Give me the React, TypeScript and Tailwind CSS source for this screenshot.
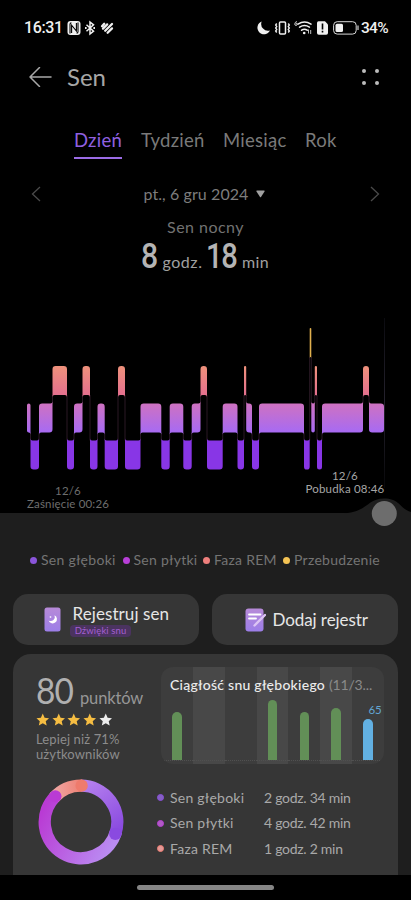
import React from "react";

type Stage = "W" | "R" | "L" | "D";

const LEVEL: Record<Stage, number> = { W: 3, R: 2, L: 1, D: 0 };
const TOP: Record<Stage, number> = { W: 18, R: 56, L: 93.5, D: 130.5 };
const BAR = 29;

// [stage, start, end] on the time axis
const stages: [Stage, number, number][] = [
  ["L", 27, 30.5],
  ["D", 30.5, 39],
  ["L", 39, 52.5],
  ["R", 52.5, 67],
  ["D", 67, 74],
  ["L", 74, 82.5],
  ["R", 82.5, 90],
  ["D", 90, 97.5],
  ["L", 97.5, 104.7],
  ["D", 104.7, 118],
  ["R", 118, 125],
  ["D", 125, 140.5],
  ["L", 140.5, 161.3],
  ["D", 161.3, 169.7],
  ["L", 169.7, 183.3],
  ["D", 183.3, 191.7],
  ["L", 191.7, 200.5],
  ["R", 200.5, 207],
  ["D", 207, 222.7],
  ["L", 222.7, 237.5],
  ["D", 237.5, 244],
  ["R", 244, 246.2],
  ["L", 246.2, 252],
  ["D", 252, 259],
  ["L", 259, 304],
  ["D", 304, 309.7],
  ["W", 309.7, 311.3],
  ["L", 311.3, 314.8],
  ["R", 314.8, 317],
  ["D", 317, 322],
  ["L", 322, 363],
  ["R", 363, 369],
  ["L", 369, 384],
];

const stagePath = (i: number) => {
  const [stage, x1, x2] = stages[i];
  const t = TOP[stage];
  const b = t + BAR;
  const r = Math.min(3.2, (x2 - x1) / 2);
  const f = Math.min(2, r);
  const prev = stages[i - 1];
  const next = stages[i + 1];
  const upLeft = prev && LEVEL[prev[0]] > LEVEL[stage];
  const downLeft = prev && !upLeft;
  const upRight = next && LEVEL[next[0]] > LEVEL[stage];
  const downRight = next && !upRight;
  return [
    upLeft
      ? `M${x1} ${t - f}Q${x1} ${t} ${x1 + f} ${t}`
      : `M${x1} ${t + r}Q${x1} ${t} ${x1 + r} ${t}`,
    upRight
      ? `L${x2 - f} ${t}Q${x2} ${t} ${x2} ${t - f}`
      : `L${x2 - r} ${t}Q${x2} ${t} ${x2} ${t + r}`,
    downRight
      ? `L${x2} ${b + f}Q${x2} ${b} ${x2 - f} ${b}`
      : `L${x2} ${b - r}Q${x2} ${b} ${x2 - r} ${b}`,
    downLeft
      ? `L${x1 + f} ${b}Q${x1} ${b} ${x1} ${b + f}`
      : `L${x1 + r} ${b}Q${x1} ${b} ${x1} ${b - r}`,
    "Z",
  ].join("");
};

const FILL: Record<Stage, string> = {
  W: "#e0b04e",
  R: "url(#rem)",
  L: "url(#light)",
  D: "#8836e6",
};

function StatusBar() {
  return (
    <div className="flex h-14 items-center pl-[24px] pr-[22px] text-[#f0f0f0]">
      <span className="w-[43px] whitespace-nowrap font-[Roboto] text-[16px] font-medium leading-none tracking-[-0.35px]">
        16:31
      </span>
      <svg width="47" height="16" viewBox="0 0 47 16" fill="none">
        <rect x="0.5" y="1" width="13" height="14" rx="3" fill="#f0f0f0" />
        <path
          d="M4.6 13V5.2L9.4 11V3M3 13.4V4.2q0-1.3 1.4-1.3M11 2.6v9.2q0 1.3-1.4 1.3"
          stroke="#000"
          strokeWidth="1.1"
        />
        <path
          d="M19.5 4.8l7 6.4L23 14V2l3.5 2.8-7 6.4"
          stroke="#f0f0f0"
          strokeWidth="1.5"
        />
        <path d="M18 8h1.6M26.4 8H28" stroke="#f0f0f0" strokeWidth="1.8" />
        <path
          d="M35 6.2l2.2-2.4M36 8.6l4.2-4.2M38.2 10.8l6.8-6.800M40.600 12.800L45 8.400"
          stroke="#f0f0f0"
          strokeWidth="2.300"
          strokeLinecap="round"
        />
      </svg>
      <svg
        className="ml-auto"
        width="102"
        height="16"
        viewBox="0 0 102 16"
        fill="none"
      >
        <path
          d="M5.200 1.800A6.600 6.600 0 1 0 13.500 10.800 6.800 6.800 0 0 1 5.200 1.800Z"
          fill="#f0f0f0"
          transform="translate(-0.500 -0.300)"
        />
        <rect
          x="22.500"
          y="2"
          width="6"
          height="12"
          rx="1"
          stroke="#f0f0f0"
          strokeWidth="1.500"
        />
        <path
          d="M19.700 3.500l-1 1.500 1 1.500-1 1.500 1 1.500-1 1.500 1 1.500M31.300 3.500l1 1.500-1 1.500 1 1.500-1 1.500 1 1.500-1 1.500"
          stroke="#f0f0f0"
          strokeWidth="1.400"
        />
        <path
          d="M39.600 1.200q-1.800 1.500-1.800 3a1.200 1.200 0 1 0 1.200-1.200"
          stroke="#f0f0f0"
          strokeWidth="0.900"
        />
        <path
          d="M41 4.200q6.500-4.200 13 0M42.600 7.200q4.900-3.200 9.800 0M44.600 10.200q2.900-2 5.600 0"
          stroke="#f0f0f0"
          strokeWidth="1.500"
          strokeLinecap="round"
        />
        <circle cx="47.200" cy="13" r="1.300" fill="#f0f0f0" />
        <path d="M51.500 13.500v-4M53.700 10v4" stroke="#c0c0c0" strokeWidth="1" />
        <path
          d="M61.500 1.200h6.500l3 3.200v8.600q0 1.800-1.800 1.800h-7.400q-1.800 0-1.800-1.800v-10q0-1.800 1.500-1.800Z"
          fill="#f0f0f0"
        />
        <path d="M65.500 3.500v6M65.500 10.700v1.800" stroke="#000" strokeWidth="1.600" />
        <rect
          x="76.600"
          y="1.700"
          width="22.600"
          height="12.400"
          rx="3.600"
          stroke="#d8d8d8"
          strokeWidth="1"
        />
        <rect x="78.500" y="3.700" width="7.500" height="8.400" rx="1.500" fill="#f0f0f0" />
        <path d="M101 5.500v4.500" stroke="#d8d8d8" strokeWidth="1.200" />
      </svg>
      <span className="ml-[2px] mt-[1px] w-[28px] whitespace-nowrap font-[Roboto] text-[15.500px] font-medium leading-none tracking-[-0.700px]">
        34%
      </span>
    </div>
  );
}

function Header() {
  return (
    <div className="flex h-[42px] items-center pl-[29px] pr-[31px]">
      <svg width="23" height="20" viewBox="0 0 23 20" fill="none">
        <path
          d="M22 10H1M10.500 0.500L1 10l9.500 9.500"
          stroke="#a8a8a8"
          strokeWidth="1.500"
          strokeLinecap="round"
          strokeLinejoin="round"
        />
      </svg>
      <h1 className="ml-[15px] text-[24px] leading-none text-[#a6a6a6]">Sen</h1>
      <div className="mr-px ml-auto grid grid-cols-2 gap-x-[9px] gap-y-[8.500px]">
        <i className="size-1 rounded-full bg-[#bcbcbc]" />
        <i className="size-1 rounded-full bg-[#bcbcbc]" />
        <i className="size-1 rounded-full bg-[#bcbcbc]" />
        <i className="size-1 rounded-full bg-[#bcbcbc]" />
      </div>
    </div>
  );
}

function SleepChart() {
  return (
    <svg width="411" height="203" viewBox="0 0 411 203" className="block">
      <defs>
        <linearGradient id="rem" x1="0" x2="0" y1="56" y2="85" gradientUnits="userSpaceOnUse">
          <stop stopColor="#ee917b" />
          <stop offset="1" stopColor="#e4708e" />
        </linearGradient>
        <linearGradient id="light" x1="0" x2="0" y1="93" y2="123" gradientUnits="userSpaceOnUse">
          <stop stopColor="#cf72c0" />
          <stop offset="1" stopColor="#a66af4" />
        </linearGradient>
        <linearGradient id="now" x1="0" x2="0" y1="8" y2="178" gradientUnits="userSpaceOnUse">
          <stop stopColor="#0b0b10" />
          <stop offset="0.500" stopColor="#26232f" />
          <stop offset="1" stopColor="#08080a" />
        </linearGradient>
      </defs>
      <rect x="384" y="8" width="1" height="170" fill="url(#now)" />
      {stages.slice(1).map(([stage, x], i) => {
        const from = stages[i][0];
        return (
          <line
            key={i}
            x1={x}
            x2={x}
            y1={Math.min(TOP[from], TOP[stage]) + BAR}
            y2={Math.max(TOP[from], TOP[stage])}
            stroke="#35202e"
            strokeWidth="0.800"
          />
        );
      })}
      {stages.map(([stage], i) => (
        <path key={i} d={stagePath(i)} fill={FILL[stage]} />
      ))}
    </svg>
  );
}

const legend = [
  { label: "Sen głęboki", dot: "bg-[#8a55da]", width: "w-[92.500px]" },
  { label: "Sen płytki", dot: "bg-[#b83fd8]", width: "w-[80.500px]" },
  { label: "Faza REM", dot: "bg-[#ee7f7c]", width: "w-[80px]" },
  { label: "Przebudzenie", dot: "bg-[#f4c354]", width: "w-[98px]" },
];

const nights = [
  { h: 48, shade: "bg-[#3d3d3d]" },
  { h: 0, shade: "bg-[#484848]" },
  { h: 0, shade: "bg-[#3d3d3d]" },
  { h: 60.5, shade: "bg-[#484848]" },
  { h: 48, shade: "bg-[#3d3d3d]" },
  { h: 52, shade: "bg-[#484848]" },
  { h: 41.5, shade: "bg-[#3d3d3d]", today: true },
];

const summary = [
  { label: "Sen głęboki", value: "2 godz. 34 min", dot: "border-[#8a4fdc] bg-[#8560c4]" },
  { label: "Sen płytki", value: "4 godz. 42 min", dot: "border-[#b93fd6] bg-[#b05cc4]" },
  { label: "Faza REM", value: "1 godz. 2 min", dot: "border-[#f07f74] bg-[#e49a98]" },
];

const polar = (deg: number) => {
  const a = ((deg - 90) * Math.PI) / 180;
  return [43 + 36.3 * Math.cos(a), 43 + 36.3 * Math.sin(a)];
};

const arc = (from: number, to: number) => {
  const [x1, y1] = polar(from);
  const [x2, y2] = polar(to);
  return `M${x1} ${y1}A36.3 36.3 0 ${to - from > 180 ? 1 : 0} 1 ${x2} ${y2}`;
};

function Donut() {
  const [lx, ly] = polar(315);
  const [dx, dy] = polar(109);
  const [rx, ry] = polar(361);
  return (
    <svg width="86" height="86" viewBox="0 0 86 86" fill="none">
      <defs>
        <linearGradient id="dDeep" x1="43" y1="7" x2="76" y2="55" gradientUnits="userSpaceOnUse">
          <stop stopColor="#b580ee" />
          <stop offset="1" stopColor="#8a4ae0" />
        </linearGradient>
        <linearGradient id="dLight" x1="78" y1="60" x2="8" y2="25" gradientUnits="userSpaceOnUse">
          <stop stopColor="#ba8cf2" />
          <stop offset="1" stopColor="#b93bd4" />
        </linearGradient>
        <linearGradient id="dRem" x1="18" y1="10" x2="48" y2="8" gradientUnits="userSpaceOnUse">
          <stop stopColor="#efa3a0" />
          <stop offset="1" stopColor="#ee7b6c" />
        </linearGradient>
      </defs>
      <g strokeWidth="12.300">
        <path d={arc(105, 315)} stroke="url(#dLight)" />
        <path d={arc(0, 109)} stroke="url(#dDeep)" />
        <path d={arc(312, 361)} stroke="url(#dRem)" />
      </g>
      <circle cx={dx} cy={dy} r="6.150" fill="#8a4ae0" />
      <circle cx={rx} cy={ry} r="6.150" fill="#ee7b6c" />
      <circle cx={lx} cy={ly} r="6.150" fill="#b93bd4" />
    </svg>
  );
}

function App() {
  return (
    <div className="flex h-[900px] w-[411px] flex-col overflow-hidden bg-black font-[Lato,'Noto_Sans',sans-serif]">
      <StatusBar />
      <Header />

      <nav className="mt-[30px] flex h-[31px] whitespace-nowrap pl-[74px] text-[18.500px] leading-[25px] tracking-[0.250px] text-[#7a7a7a]">
        <div className="w-[48px] border-b-[2.500px] border-[#9b6ce6] text-[#9060e0]">
          Dzień
        </div>
        <div className="ml-[19px] w-[82px]">Tydzień</div>
        <div className="w-[82px]">Miesiąc</div>
        <div>Rok</div>
      </nav>

      <div className="mt-[23px] flex h-6 items-center pl-[31px] pr-[31px] text-[#7d7d7d]">
        <svg width="10" height="16" viewBox="0 0 10 16" fill="none" stroke="#4a4a4a" strokeWidth="1.300">
          <path d="M9 1L1.500 8 9 15" />
        </svg>
        <span className="ml-[102.500px] w-[105.500px] whitespace-nowrap text-[16px] leading-6 tracking-[0.080px]">
          pt., 6 gru 2024
        </span>
        <svg className="ml-[7px]" width="9" height="8" viewBox="0 0 9 8">
          <path d="M1 0.500h7q1 0 0.500 0.900L5 7q-0.500 0.600-1 0L0.500 1.400Q0 0.500 1 0.500Z" fill="#a0a0a0" />
        </svg>
        <svg className="ml-auto" width="10" height="16" viewBox="0 0 10 16" fill="none" stroke="#4a4a4a" strokeWidth="1.300">
          <path d="M1 1l7.500 7L1 15" />
        </svg>
      </div>

      <div className="mt-[10px] text-center text-[16px] leading-[22px] tracking-[0.450px] text-[#727272]">
        Sen nocny
      </div>
      <div className="flex h-[36px] items-baseline whitespace-nowrap pl-[141px] text-[16px] leading-[36px] text-[#a0a0a0]">
        <b className="w-[21.500px] origin-left scale-x-[0.850] font-[Roboto] text-[35.500px] font-medium text-[#b4b4b4]">8</b>
        <span className="w-[43.500px] tracking-[0.550px]">godz.</span>
        <b className="w-[36px] origin-left scale-x-[0.820] font-[Roboto] text-[35.500px] font-medium tracking-[-1.500px] text-[#b4b4b4]">18</b>
        <span className="tracking-[0.400px]">min</span>
      </div>

      <div className="relative mt-[36px] h-[203px] shrink-0">
        <SleepChart />
        <div className="absolute left-[27px] top-[173.500px] whitespace-nowrap text-center text-[11.500px] leading-[13.500px] tracking-[0.160px] text-[#6e6e6e]">
          12/6
          <br />
          Zaśnięcie 00:26
        </div>
        <div className="absolute right-[26.500px] top-[158.500px] whitespace-nowrap text-center text-[11.500px] leading-[13.500px] tracking-[0.200px] text-[#a6a6a6]">
          12/6
          <br />
          Pobudka 08:46
        </div>
      </div>

      <main className="relative flex h-[362px] shrink-0 flex-col bg-[#1e1e1e] px-[13px]">
        <svg className="absolute -top-4 right-0" width="71" height="30" viewBox="0 0 71 30">
          <path d="M0 16.500C28 16.500 26 1.500 44 1.500 60 1.500 60 12 71 15v3H0Z" fill="#1e1e1e" />
          <circle cx="44.300" cy="16.500" r="12.500" fill="#6d6d6d" />
        </svg>

        <div className="mt-[37px] flex h-5 items-center whitespace-nowrap pl-[17px] text-[14px] leading-5 tracking-[0.280px] text-[#747474]">
          {legend.map((item) => (
            <div key={item.label} className={`flex items-center gap-[4px] ${item.width}`}>
              <i className={`size-[7px] shrink-0 rounded-full ${item.dot}`} />
              {item.label}
            </div>
          ))}
        </div>

        <div className="mt-6 grid h-[51px] shrink-0 grid-cols-2 gap-[13px]">
          <button className="flex items-center rounded-[15px] bg-[#363636] pl-[31px] text-left text-white">
            <svg width="17" height="25" viewBox="0 0 17 25">
              <defs>
                <linearGradient id="tile" x1="0" y1="0" x2="0" y2="1">
                  <stop stopColor="#b78ad8" />
                  <stop offset="1" stopColor="#9c7ee8" />
                </linearGradient>
              </defs>
              <rect x="0.500" y="0.500" width="16" height="24" rx="2.500" fill="url(#tile)" />
              <path d="M10.500 8.200A4.300 4.300 0 1 1 4.600 13.500 4.200 4.200 0 0 0 10.500 8.200Z" fill="#fff" />
              <circle cx="6.500" cy="10" r="0.900" fill="#efe4fa" />
            </svg>
            <span className="ml-[9px] mt-[1px] flex flex-col items-start">
              <span className="ml-[2.500px] whitespace-nowrap text-[17px] leading-[22px] tracking-[0.080px] text-[#e6e6e6]">
                Rejestruj sen
              </span>
              <span className="h-[12px] w-[61px] whitespace-nowrap rounded-[4px] bg-[#4b3360] text-center text-[9.500px] leading-[11px] tracking-[0.120px] text-[#a45fd0]">
                Dźwięki snu
              </span>
            </span>
          </button>
          <button className="flex items-center rounded-[15px] bg-[#363636] pl-[33px] text-white">
            <svg width="21" height="24" viewBox="0 0 21 24" fill="none">
              <rect x="0.500" y="0.500" width="18" height="23" rx="3" fill="url(#tile)" />
              <path d="M4 6.500h11.500M4 10.500h7" stroke="#fff" strokeWidth="1.800" strokeLinecap="round" />
              <path d="M9.500 17.500L20 7" stroke="#dcc4f4" strokeWidth="2.400" strokeLinecap="round" />
            </svg>
            <span className="ml-[6.500px] whitespace-nowrap text-[17px] tracking-[-0.080px] text-[#e6e6e6]">
              Dodaj rejestr
            </span>
          </button>
        </div>

        <section className="mt-[9px] h-[221px] shrink-0 rounded-t-[18px] bg-[#363636] pt-[13px]">
          <div className="flex h-[97px] justify-between pr-[14px]">
            <div className="whitespace-nowrap pl-[23px]">
              <div className="flex h-[42px] items-baseline text-[16.500px] leading-[46px] tracking-[-0.150px] text-[#969696]">
                <span className="w-[44px] origin-left scale-x-[0.930] text-[36px] tracking-[-1px] text-[#b0b0b0]">80</span>
                punktów
              </div>
              <div className="mt-[4px] flex h-[13px] items-center gap-[2.200px]">
                {[1, 2, 3, 4, 5].map((n) => (
                  <svg key={n} width="13.500" height="13.500" viewBox="0 0 24 24">
                    <path
                      d="M12 1l3.300 7.300 7.900 0.900-5.900 5.300 1.700 7.900-7-4-7 4 1.700-7.900L0.800 9.200l7.900-0.900Z"
                      fill={n === 5 ? "#ececec" : "#f6bd42"}
                    />
                  </svg>
                ))}
              </div>
              <div className="mt-[5.500px] text-[13px] leading-[15px] tracking-[0.120px] text-[#8c8c8c]">
                Lepiej niż 71%
                <br />
                użytkowników
              </div>
            </div>

            <div className="grid w-[223px] grid-cols-1 overflow-hidden rounded-[12px]">
              <div className="col-start-1 row-start-1 grid grid-cols-7">
                {nights.map((night, i) => (
                  <div key={i} className={`flex flex-col items-center justify-end ${night.shade}`}>
                    {night.today && (
                      <span className="mb-[2px] ml-[14px] text-[11.500px] leading-[14px] text-[#62a6d4]">65</span>
                    )}
                    <div
                      className={
                        night.today
                          ? "w-[9.500px] rounded-t-full bg-[#62b0e2]"
                          : "w-[9.500px] rounded-t-full bg-[#628f57]"
                      }
                      style={{ height: night.h }}
                    />
                    <div className="h-[4px] w-full border-t border-dotted border-[#505050]" />
                  </div>
                ))}
              </div>
              <div className="z-10 col-start-1 row-start-1 whitespace-nowrap pl-[9px] pt-[8px] text-[14px] font-medium leading-[19px] tracking-[0.260px] text-[#ececec]">
                Ciągłość snu głębokiego{" "}
                <span className="font-normal tracking-[-0.150px] text-[#8a8a8a]">(11/3...</span>
              </div>
            </div>
          </div>

          <div className="mt-[15px] flex pl-[24.500px]">
            <Donut />
            <div className="ml-[33px] mt-[6px] flex flex-col whitespace-nowrap text-[14px] leading-[25.400px] text-[#a9a9a9]">
              {summary.map((row) => (
                <div key={row.label} className="flex h-[25.400px] items-center">
                  <i className={`mr-[6.500px] size-[7px] rounded-full border-[1.500px] ${row.dot}`} />
                  <span className="w-[94px] tracking-[0.250px]">{row.label}</span>
                  <span className="tracking-[-0.270px]">{row.value}</span>
                </div>
              ))}
            </div>
          </div>
        </section>
      </main>

      <footer className="flex h-[25px] shrink-0 justify-center pt-[10px]">
        <div className="h-[5px] w-[137px] rounded-full bg-[#858585]" />
      </footer>
    </div>
  );
}

export default App;
